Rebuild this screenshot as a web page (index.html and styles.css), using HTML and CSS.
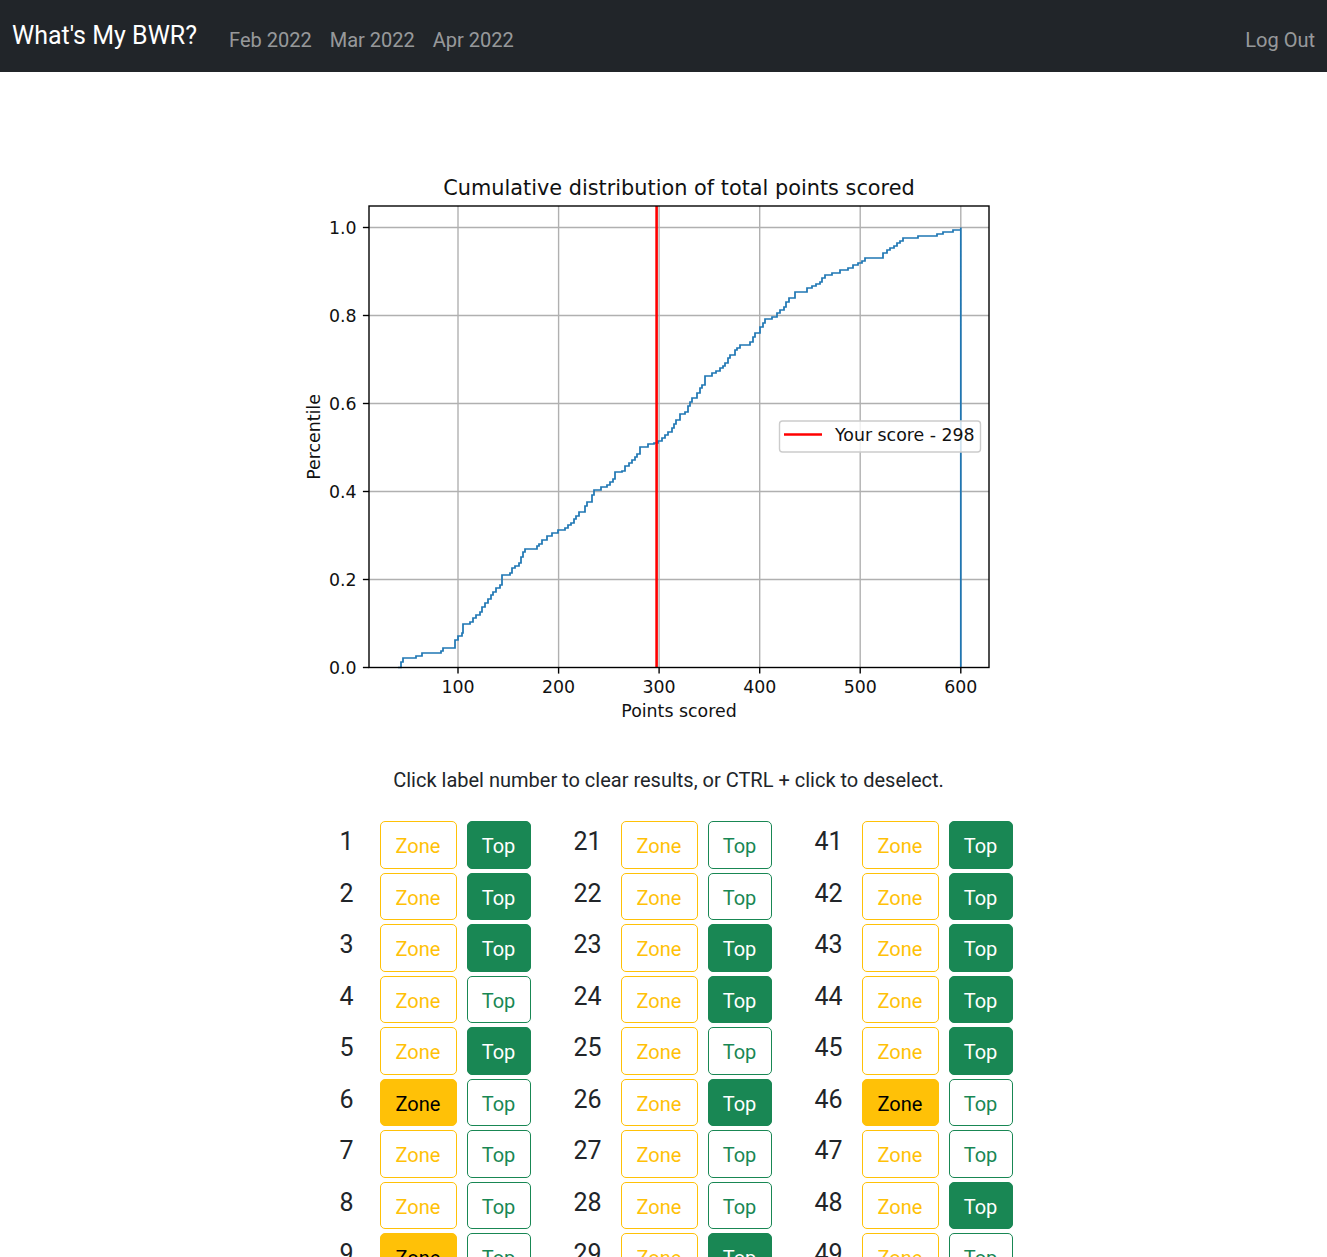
FILE: index.html
```html
<!DOCTYPE html>
<html lang="en">
<head>
<meta charset="utf-8">
<title>What's My BWR?</title>
<link rel="stylesheet" href="styles.css">
</head>
<body>
<nav class="navbar">
  <a class="brand" href="#">What's My BWR?</a>
  <ul class="nav-links">
    <li><a class="nav-link" href="#">Feb 2022</a></li>
    <li><a class="nav-link" href="#">Mar 2022</a></li>
    <li><a class="nav-link" href="#">Apr 2022</a></li>
  </ul>
  <a class="nav-link logout" href="#">Log Out</a>
</nav>

<main class="main">
  <div class="chart-wrap">
    <svg class="chart" width="800" height="600" viewBox="269 134 800 600" xmlns="http://www.w3.org/2000/svg">
      <rect x="269" y="134" width="800" height="600" fill="#fff"/>
      <g stroke="#b0b0b0" stroke-width="1.39" fill="none">
        <line x1="458" y1="206" x2="458" y2="667.5"/>
        <line x1="558.6" y1="206" x2="558.6" y2="667.5"/>
        <line x1="659.1" y1="206" x2="659.1" y2="667.5"/>
        <line x1="759.7" y1="206" x2="759.7" y2="667.5"/>
        <line x1="860.2" y1="206" x2="860.2" y2="667.5"/>
        <line x1="960.8" y1="206" x2="960.8" y2="667.5"/>
        <line x1="369" y1="579.5" x2="989" y2="579.5"/>
        <line x1="369" y1="491.5" x2="989" y2="491.5"/>
        <line x1="369" y1="403.5" x2="989" y2="403.5"/>
        <line x1="369" y1="315.5" x2="989" y2="315.5"/>
        <line x1="369" y1="227.5" x2="989" y2="227.5"/>
      </g>
      <path fill="none" stroke="#1f77b4" stroke-width="1.74" d="M398 667.5 H401 V662 H403 V658 H416 V656 H422 V653 H441 V651 H443 V648 H455 V640 H458 V636 H462 V633 H463 V624 H470 V622 H473 V618 H476 V615 H480 V612 H482 V607 H485 V603 H488 V599 H491 V595 H493 V592 H496 V588 H500 V585 H502 V575 H510 V573 H512 V568 H515 V566 H519 V563 H521 V557 H523 V552 H525 V549 H537 V546 H539 V544 H542 V540 H547 V536 H552 V533 H558 V530 H565 V528 H568 V525 H571 V523 H574 V519 H576 V516 H579 V512 H585 V506 H587 V502 H592 V495 H594 V490 H601 V487 H607 V485 H610 V482 H613 V479 H615 V472 H622 V471 H625 V466 H629 V463 H632 V460 H635 V457 H637 V454 H640 V447 H648 V444 H654 V443 H658 V441 H662 V438 H665 V435 H668 V432 H672 V428 H674 V424 H676 V420 H680 V414 H685 V412 H688 V406 H690 V402 H692 V398 H697 V393 H700 V388 H702 V385 H705 V376 H712 V373 H716 V371 H720 V368 H723 V366 H725 V363 H728 V358 H730 V355 H735 V350 H737 V348 H740 V345 H750 V342 H753 V337 H755 V333 H760 V327 H763 V323 H765 V319 H772 V317 H777 V313 H780 V310 H784 V307 H786 V302 H789 V298 H795 V292 H807 V288 H812 V286 H816 V284 H820 V282 H822 V278 H825 V275 H832 V273 H840 V270 H848 V268 H853 V265 H858 V263 H862 V261 H865 V258 H880 V258 H883 V253 H887 V250 H890 V248 H894 V246 H897 V243 H900 V241 H903 V238 H918 V236 H937 V234 H943 V232 H953 V230 H960.8 V227.5 V667.5"/>
      <line x1="656.6" y1="206" x2="656.6" y2="667.5" stroke="#ff0000" stroke-width="2.6"/>
      <rect x="369" y="206" width="620" height="461.5" fill="none" stroke="#000" stroke-width="1.39"/>
      <g stroke="#000" stroke-width="1.39">
        <line x1="458" y1="667.5" x2="458" y2="673.6"/>
        <line x1="558.6" y1="667.5" x2="558.6" y2="673.6"/>
        <line x1="659.1" y1="667.5" x2="659.1" y2="673.6"/>
        <line x1="759.7" y1="667.5" x2="759.7" y2="673.6"/>
        <line x1="860.2" y1="667.5" x2="860.2" y2="673.6"/>
        <line x1="960.8" y1="667.5" x2="960.8" y2="673.6"/>
        <line x1="362.9" y1="667.5" x2="369" y2="667.5"/>
        <line x1="362.9" y1="579.5" x2="369" y2="579.5"/>
        <line x1="362.9" y1="491.5" x2="369" y2="491.5"/>
        <line x1="362.9" y1="403.5" x2="369" y2="403.5"/>
        <line x1="362.9" y1="315.5" x2="369" y2="315.5"/>
        <line x1="362.9" y1="227.5" x2="369" y2="227.5"/>
      </g>
      <g class="tick" text-anchor="middle">
        <text x="458" y="693.3">100</text>
        <text x="558.6" y="693.3">200</text>
        <text x="659.1" y="693.3">300</text>
        <text x="759.7" y="693.3">400</text>
        <text x="860.2" y="693.3">500</text>
        <text x="960.8" y="693.3">600</text>
      </g>
      <g class="tick" text-anchor="end">
        <text x="356.5" y="673.8">0.0</text>
        <text x="356.5" y="585.8">0.2</text>
        <text x="356.5" y="497.8">0.4</text>
        <text x="356.5" y="409.8">0.6</text>
        <text x="356.5" y="321.8">0.8</text>
        <text x="356.5" y="233.8">1.0</text>
      </g>
      <text class="tick" x="679" y="716.5" text-anchor="middle">Points scored</text>
      <text class="tick" x="0" y="0" text-anchor="middle" transform="translate(319.5 437) rotate(-90)">Percentile</text>
      <text class="title" x="679" y="194.5" text-anchor="middle">Cumulative distribution of total points scored</text>
      <rect x="779.5" y="421" width="201" height="31" rx="3" fill="#fff" fill-opacity="0.8" stroke="#cccccc" stroke-width="1.39"/>
      <line x1="784" y1="434.5" x2="822" y2="434.5" stroke="#ff0000" stroke-width="2.6"/>
      <text class="tick" x="835" y="440.7">Your score - 298</text>
    </svg>
  </div>

  <p class="hint">Click label number to clear results, or CTRL + click to deselect.</p>

  <div class="board-wrap">
    <div class="board">
      <div class="col">
        <div class="row"><span class="num">1</span><button class="btn zone">Zone</button><button class="btn top on">Top</button></div>
        <div class="row"><span class="num">2</span><button class="btn zone">Zone</button><button class="btn top on">Top</button></div>
        <div class="row"><span class="num">3</span><button class="btn zone">Zone</button><button class="btn top on">Top</button></div>
        <div class="row"><span class="num">4</span><button class="btn zone">Zone</button><button class="btn top">Top</button></div>
        <div class="row"><span class="num">5</span><button class="btn zone">Zone</button><button class="btn top on">Top</button></div>
        <div class="row"><span class="num">6</span><button class="btn zone on">Zone</button><button class="btn top">Top</button></div>
        <div class="row"><span class="num">7</span><button class="btn zone">Zone</button><button class="btn top">Top</button></div>
        <div class="row"><span class="num">8</span><button class="btn zone">Zone</button><button class="btn top">Top</button></div>
        <div class="row"><span class="num">9</span><button class="btn zone on">Zone</button><button class="btn top">Top</button></div>
      </div>
      <div class="col">
        <div class="row"><span class="num">21</span><button class="btn zone">Zone</button><button class="btn top">Top</button></div>
        <div class="row"><span class="num">22</span><button class="btn zone">Zone</button><button class="btn top">Top</button></div>
        <div class="row"><span class="num">23</span><button class="btn zone">Zone</button><button class="btn top on">Top</button></div>
        <div class="row"><span class="num">24</span><button class="btn zone">Zone</button><button class="btn top on">Top</button></div>
        <div class="row"><span class="num">25</span><button class="btn zone">Zone</button><button class="btn top">Top</button></div>
        <div class="row"><span class="num">26</span><button class="btn zone">Zone</button><button class="btn top on">Top</button></div>
        <div class="row"><span class="num">27</span><button class="btn zone">Zone</button><button class="btn top">Top</button></div>
        <div class="row"><span class="num">28</span><button class="btn zone">Zone</button><button class="btn top">Top</button></div>
        <div class="row"><span class="num">29</span><button class="btn zone">Zone</button><button class="btn top on">Top</button></div>
      </div>
      <div class="col">
        <div class="row"><span class="num">41</span><button class="btn zone">Zone</button><button class="btn top on">Top</button></div>
        <div class="row"><span class="num">42</span><button class="btn zone">Zone</button><button class="btn top on">Top</button></div>
        <div class="row"><span class="num">43</span><button class="btn zone">Zone</button><button class="btn top on">Top</button></div>
        <div class="row"><span class="num">44</span><button class="btn zone">Zone</button><button class="btn top on">Top</button></div>
        <div class="row"><span class="num">45</span><button class="btn zone">Zone</button><button class="btn top on">Top</button></div>
        <div class="row"><span class="num">46</span><button class="btn zone on">Zone</button><button class="btn top">Top</button></div>
        <div class="row"><span class="num">47</span><button class="btn zone">Zone</button><button class="btn top">Top</button></div>
        <div class="row"><span class="num">48</span><button class="btn zone">Zone</button><button class="btn top on">Top</button></div>
        <div class="row"><span class="num">49</span><button class="btn zone">Zone</button><button class="btn top">Top</button></div>
      </div>
    </div>
  </div>
</main>
</body>
</html>
```
FILE: styles.css
```css
html, body {
  margin: 0;
  padding: 0;
  background: #fff;
}

body {
  font-family: Roboto, "Liberation Sans", sans-serif;
  font-size: 20px;
  line-height: 30px;
  color: #212529;
}

/* ---------- navbar ---------- */
.navbar {
  display: flex;
  align-items: flex-start;
  height: 72px;
  box-sizing: border-box;
  padding: 0 12px;
  background: #212529;
}

.brand {
  font-size: 25px;
  line-height: 37.5px;
  padding-top: 16.5px;
  margin-right: 23px;
  color: #fff;
  text-decoration: none;
  white-space: nowrap;
}

.nav-links {
  display: flex;
  list-style: none;
  margin: 0;
  padding: 25px 0 0 0;
}

.nav-link {
  display: block;
  padding: 0 9px;
  font-size: 20px;
  line-height: 30px;
  color: rgba(255, 255, 255, 0.55);
  text-decoration: none;
  white-space: nowrap;
}

.logout {
  margin-left: auto;
  padding: 25px 0 0 0;
}

/* ---------- chart ---------- */
.chart-wrap {
  display: flex;
  justify-content: center;
  padding: 62px 0 0 11px;
}

.chart {
  display: block;
}

.chart .tick {
  font-family: "DejaVu Sans", sans-serif;
  font-size: 17.36px;
  fill: #111;
}

.chart .title {
  font-family: "DejaVu Sans", sans-serif;
  font-size: 20.83px;
  fill: #111;
}

/* ---------- hint ---------- */
.hint {
  margin: 30.5px 0 0 0;
  padding-left: 10px;
  text-align: center;
}

/* ---------- board ---------- */
.board-wrap {
  display: flex;
  justify-content: center;
  padding: 26.5px 0 40px 7px;
}

.board {
  display: flex;
  gap: 32px;
}

.col {
  display: flex;
  flex-direction: column;
  gap: 4px;
}

.row {
  display: flex;
  align-items: flex-start;
}

.num {
  width: 50px;
  margin-right: 8px;
  padding-top: 2px;
  font-size: 25px;
  line-height: 37.5px;
  text-align: center;
  color: #212529;
}

.btn {
  box-sizing: border-box;
  height: 47.5px;
  padding: 9px 0 6px 0;
  border: 1px solid;
  border-radius: 5px;
  background: #fff;
  font-family: Roboto, "Liberation Sans", sans-serif;
  font-size: 20px;
  line-height: 30px;
  text-align: center;
  cursor: pointer;
}

.zone {
  width: 77px;
  margin-right: 10px;
  border-color: #ffc107;
  color: #ffc107;
}

.zone.on {
  background: #ffc107;
  color: #000;
}

.top {
  width: 64px;
  border-color: #198754;
  color: #198754;
}

.top.on {
  background: #198754;
  color: #fff;
}
```
